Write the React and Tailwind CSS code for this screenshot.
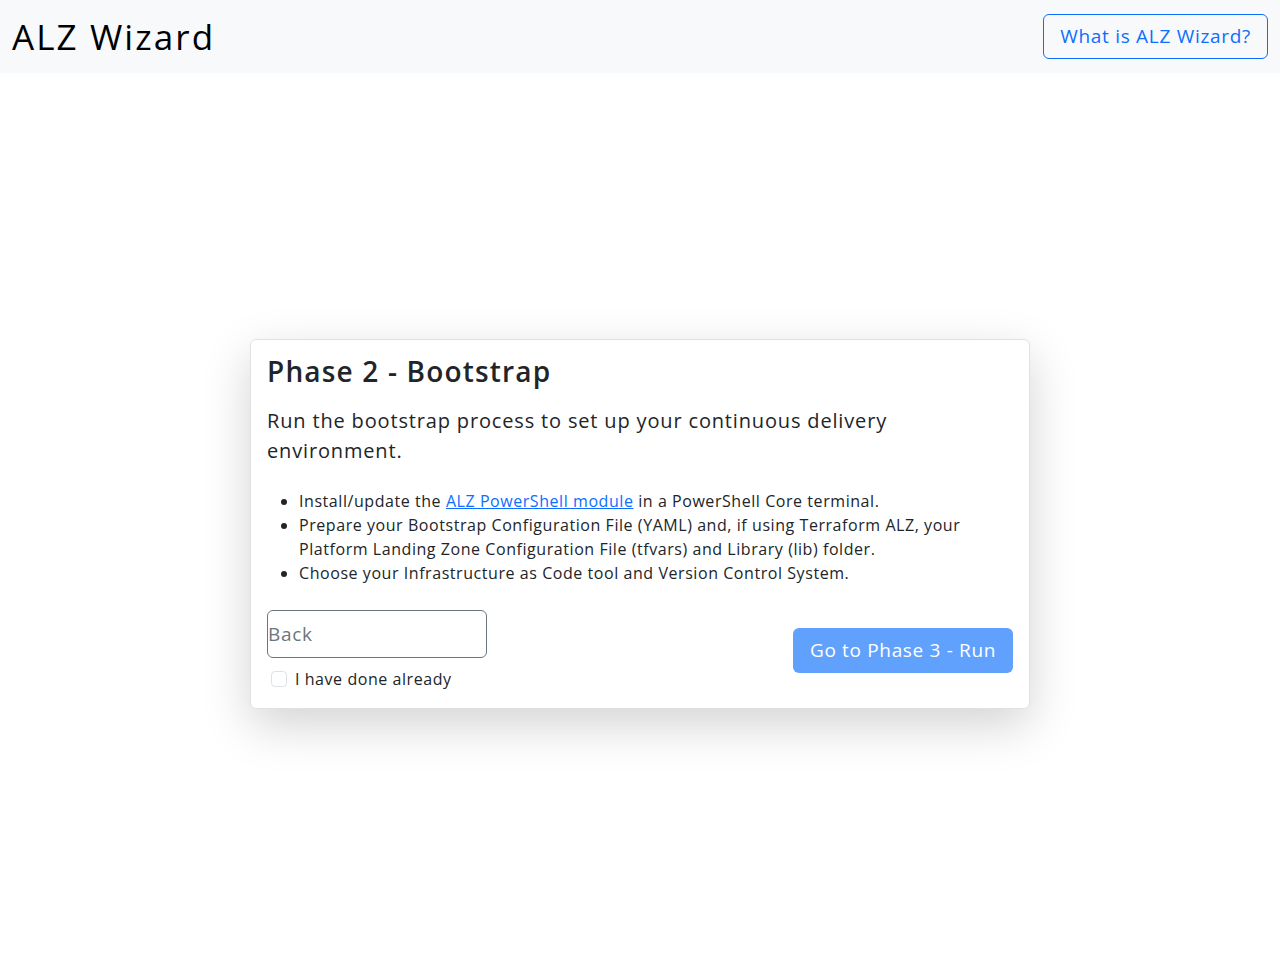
export default function App() {
    return (
        <div className="min-h-[974px] bg-white text-[#212529] font-['Open_Sans',sans-serif] tracking-[0.035em]">
            <nav className="h-[73px] bg-[#f8f9fa] flex items-center justify-between px-3">
                <span className="text-[35px] tracking-[0.06em] text-black leading-none">ALZ Wizard</span>
                <button className="h-[45px] px-4 border border-[#0d6efd] rounded-md text-[#0d6efd] text-[19px] tracking-[0.037em]">
                    What is ALZ Wizard?
                </button>
            </nav>

            <div className="flex justify-center pt-[266px]">
                <div className="w-[780px] border border-[#dee2e6] rounded-md bg-white shadow-[0_16px_48px_rgba(0,0,0,0.175)] p-4 pt-[15px] pb-[17px]">
                    <h3 className="text-[28px] font-semibold leading-[1.2] tracking-[0.042em] mb-[17px]">Phase 2 - Bootstrap</h3>
                    <p className="text-[20px] leading-[30px] tracking-[0.042em] mb-[23px] pr-[110px]">
                        Run the bootstrap process to set up your continuous delivery environment.
                    </p>
                    <ul className="list-disc pl-8 text-[16px] leading-6 pr-[40px] mb-[25px]">
                        <li>
                            Install/update the{" "}
                            <a href="#" className="text-[#0d6efd] underline">ALZ PowerShell module</a>{" "}
                            in a PowerShell Core terminal.
                        </li>
                        <li>
                            Prepare your Bootstrap Configuration File (YAML) and, if using Terraform ALZ, your Platform Landing Zone Configuration File (tfvars) and Library (lib) folder.
                        </li>
                        <li>Choose your Infrastructure as Code tool and Version Control System.</li>
                    </ul>
                    <div className="flex items-start justify-between">
                        <div className="flex flex-col">
                            <input
                                placeholder="Back"
                                className="w-[220px] h-[48px] border border-[#6c757d] rounded-md text-[19px] tracking-[0.035em] placeholder:text-[#6c757d] outline-none"
                            />
                            <label className="flex items-center gap-2 mt-[9px] ml-1 text-[16px]">
                                <span className="w-4 h-4 border border-[#dee2e6] rounded-[4px] bg-white"></span>
                                I have done already
                            </label>
                        </div>
                        <button className="mt-[18px] w-[220px] h-[45px] rounded-md bg-[#0d6efd]/65 text-white text-[19px] tracking-[0.035em]">
                            Go to Phase 3 - Run
                        </button>
                    </div>
                </div>
            </div>
        </div>
    );
}
